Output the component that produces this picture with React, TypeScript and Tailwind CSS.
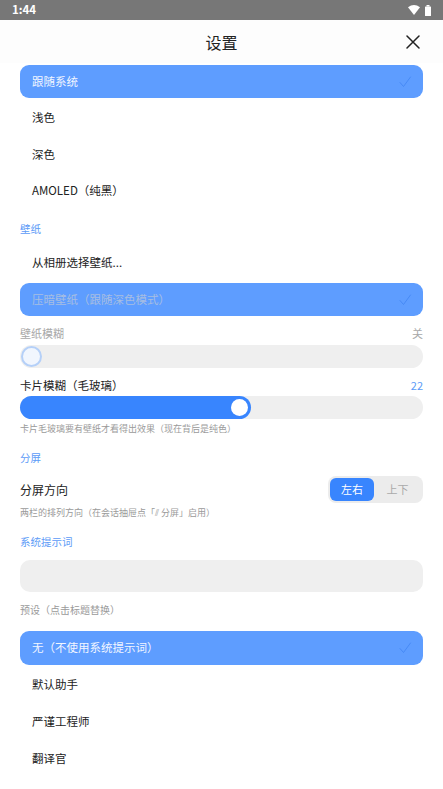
import React from "react";

const font = { fontFamily: '"Noto Sans CJK SC", "Noto Sans", Roboto, sans-serif' };

function Check() {
  return (
    <svg width="14" height="14" viewBox="0 0 14 14" fill="none">
      <polyline points="2,7.5 5.5,11.5 12.5,2" stroke="#3f83f2" strokeWidth="1" strokeLinecap="round" strokeLinejoin="round" opacity="0.75" />
    </svg>
  );
}

function Option({ label, selected, dim, tall }: { label: string; selected?: boolean; dim?: boolean; tall?: boolean }) {
  const h = tall ? "h-[34px]" : "h-[33px]";
  if (selected) {
    return (
      <div className={"mx-5 rounded-[9px] bg-[#5e9dff] flex items-center justify-between pl-3 pr-[11px] shrink-0 " + h}>
        <span className={"text-[11.5px] " + (dim ? "text-[#a7bde2]" : "text-[#f2f6ff]")}>{label}</span>
        <Check />
      </div>
    );
  }
  return (
    <div className={"mx-5 flex items-center pl-3 shrink-0 " + h}>
      <span className="text-[11.5px] text-[#222]">{label}</span>
    </div>
  );
}

function SectionTitle({ children, className }: { children: React.ReactNode; className?: string }) {
  return <div className={"px-5 text-[10.5px] leading-4 text-[#5c9bf7] " + (className ?? "")}>{children}</div>;
}

export default function App() {
  return (
    <div className="w-[443px] h-[789px] bg-white overflow-hidden flex flex-col" style={font}>
      {/* status bar */}
      <div className="h-5 bg-[#777777] flex items-center justify-between px-3 shrink-0">
        <span className="text-[11.5px] font-bold text-white leading-none">1:44</span>
        <div className="flex items-center gap-[5px]">
          <svg width="12" height="10" viewBox="0 0 12 10">
            <path d="M0 2.2 Q6 -2 12 2.2 L6 10 Z" fill="#fff" />
          </svg>
          <svg width="6" height="11" viewBox="0 0 6 11">
            <rect x="1.5" y="0" width="3" height="1.5" fill="#fff" />
            <rect x="0" y="1.5" width="6" height="9.5" rx="0.5" fill="#fff" />
          </svg>
        </div>
      </div>

      {/* header */}
      <div className="h-[43px] relative flex items-center justify-center shrink-0 bg-[#fdfdfd]">
        <span className="text-[16px] text-[#222]">设置</span>
        <button className="absolute right-[23px] top-[15px]">
          <svg width="14" height="14" viewBox="0 0 14 14">
            <path d="M1 1 L13 13 M13 1 L1 13" stroke="#222" strokeWidth="1.5" strokeLinecap="round" />
          </svg>
        </button>
      </div>

      <div className="flex flex-col gap-[3.5px] mt-[2px]">
        <Option label="跟随系统" selected />
        <Option label="浅色" />
        <Option label="深色" />
        <Option label="AMOLED（纯黑）" />
      </div>

      <SectionTitle className="mt-[13.5px]">壁纸</SectionTitle>
      <div className="flex flex-col gap-[3.5px] mt-[9.5px]">
        <Option label="从相册选择壁纸..." />
        <Option label="压暗壁纸（跟随深色模式）" selected dim />
      </div>

      <div className="mx-5 mt-[9px] flex justify-between text-[11px] leading-4 text-[#a8a8a8]">
        <span>壁纸模糊</span>
        <span>关</span>
      </div>
      <div className="mx-5 mt-[4px] h-[23px] rounded-full bg-[#efefef] flex items-center pl-[1px] shrink-0">
        <div className="w-[21px] h-[21px] rounded-full border-[2.5px] border-[#b5d0f8] bg-[#f1f6fe]" />
      </div>

      <div className="mx-5 mt-[9px] flex justify-between items-center leading-4">
        <span className="text-[11.5px] text-[#222]">卡片模糊（毛玻璃）</span>
        <span className="text-[11px] text-[#5c9bf7]">22</span>
      </div>
      <div className="mx-5 mt-[3px] h-[23px] rounded-full bg-[#efefef] flex shrink-0">
        <div className="w-[231px] h-full rounded-full bg-[#3885fe] flex items-center justify-end pr-[3px]">
          <div className="w-[17px] h-[17px] rounded-full bg-white" />
        </div>
      </div>
      <div className="px-5 mt-[3px] text-[9px] leading-[14px] text-[#9a9a9a]">卡片毛玻璃要有壁纸才看得出效果（现在背后是纯色）</div>

      <SectionTitle className="mt-[14px]">分屏</SectionTitle>
      <div className="mx-5 mt-[10px] flex items-center justify-between">
        <span className="text-[12px] text-[#222]">分屏方向</span>
        <div className="w-[95px] h-[27px] rounded-[8px] bg-[#ececec] p-[2px] flex">
          <div className="w-[44px] h-full rounded-[6px] bg-[#3885fe] flex items-center justify-center text-[11px] text-white">左右</div>
          <div className="flex-1 flex items-center justify-center text-[11px] text-[#aaaaaa]">上下</div>
        </div>
      </div>
      <div className="px-5 mt-[3px] text-[9px] leading-[14px] text-[#9a9a9a]">两栏的排列方向（在会话抽屉点「⫽ 分屏」启用）</div>

      <SectionTitle className="mt-[14px]">系统提示词</SectionTitle>
      <div className="mx-5 mt-[10px] h-[32px] rounded-[10px] bg-[#efefef] shrink-0" />
      <div className="px-5 mt-[10px] text-[10px] leading-4 text-[#9a9a9a]">预设（点击标题替换）</div>

      <div className="flex flex-col gap-[3px] mt-[13px]">
        <Option label="无（不使用系统提示词）" selected tall />
        <Option label="默认助手" tall />
        <Option label="严谨工程师" tall />
        <Option label="翻译官" tall />
      </div>
    </div>
  );
}
